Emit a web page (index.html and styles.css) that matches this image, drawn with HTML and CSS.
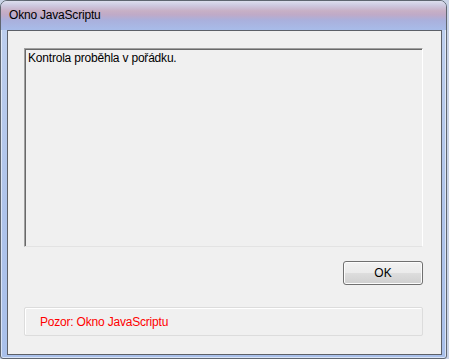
FILE: index.html
```html
<!DOCTYPE html>
<html>
<head>
<meta charset="utf-8">
<link rel="stylesheet" href="styles.css">
</head>
<body>
<div class="window">
  <div class="titlebar"><span class="title">Okno JavaScriptu</span></div>
  <div class="client">
    <div class="message">Kontrola proběhla v pořádku.</div>
    <div class="actions"><button class="ok">OK</button></div>
    <div class="status">Pozor: Okno JavaScriptu</div>
  </div>
</div>
</body>
</html>
```
FILE: styles.css
```css
html, body {
  margin: 0;
  padding: 0;
  background: #c9d3e6;
  width: 449px;
  height: 359px;
  overflow: hidden;
}
.window {
  box-sizing: border-box;
  width: 447px;
  height: 359px;
  border: 1px solid #5f6670;
  border-radius: 7px 7px 3px 3px;
  background: linear-gradient(180deg, #bfd0ee 0%, #aec3ea 60%, #a9c0ea 100%);
  padding: 0 4px 3px 6px;
  display: flex;
  flex-direction: column;
  font-family: "Liberation Sans", "Noto Sans", sans-serif;
  letter-spacing: -0.2px;
  box-shadow: inset 0 0 0 1px rgba(255,255,255,0.55);
}
.titlebar {
  height: 29px;
  display: flex;
  align-items: center;
  margin: 0 -4px 0 -6px;
  padding-left: 8px;
  padding-bottom: 1px;
  box-sizing: border-box;
  background: linear-gradient(180deg,
    #dcdfee 0%, #cdc8df 16%, #c7b0c6 34%, #bfaac8 48%, #aab0dc 66%, #a8bce9 100%);
  border-radius: 6px 6px 0 0;
}
.title {
  font-size: 12px;
  color: #000;
}
.client {
  flex: 1;
  background: #f0f0f0;
  border: 1px solid #5c6068;
  padding: 17px 18px 0 16px;
  display: flex;
  flex-direction: column;
}
.message {
  box-sizing: border-box;
  height: 199px;
  border-top: 1px solid #a0a0a0;
  border-left: 1px solid #a0a0a0;
  border-right: 1px solid #ffffff;
  border-bottom: 1px solid #e3e3e3;
  box-shadow: inset 1px 1px 0 #696969;
  font-size: 12px;
  line-height: 14px;
  color: #000;
  padding: 2px 3px;
}
.actions {
  display: flex;
  justify-content: flex-end;
  margin-top: 14px;
}
.ok {
  width: 80px;
  height: 24px;
  border: 1px solid #707070;
  border-radius: 3px;
  background: linear-gradient(180deg, #f2f2f2 0%, #ebebeb 48%, #dddddd 52%, #cfcfcf 100%);
  box-shadow: inset 0 0 0 1px #fcfcfc;
  font-family: "Liberation Sans", "Noto Sans", sans-serif;
  font-size: 12px;
  color: #000;
  padding: 0;
}
.status {
  box-sizing: border-box;
  margin-top: 22px;
  height: 29px;
  border: 1px solid #dcdcdc;
  border-radius: 2px;
  box-shadow: inset 1px 1px 0 #ffffff;
  color: #ff0000;
  font-size: 12px;
  display: flex;
  align-items: center;
  padding-left: 15px;
}
```
